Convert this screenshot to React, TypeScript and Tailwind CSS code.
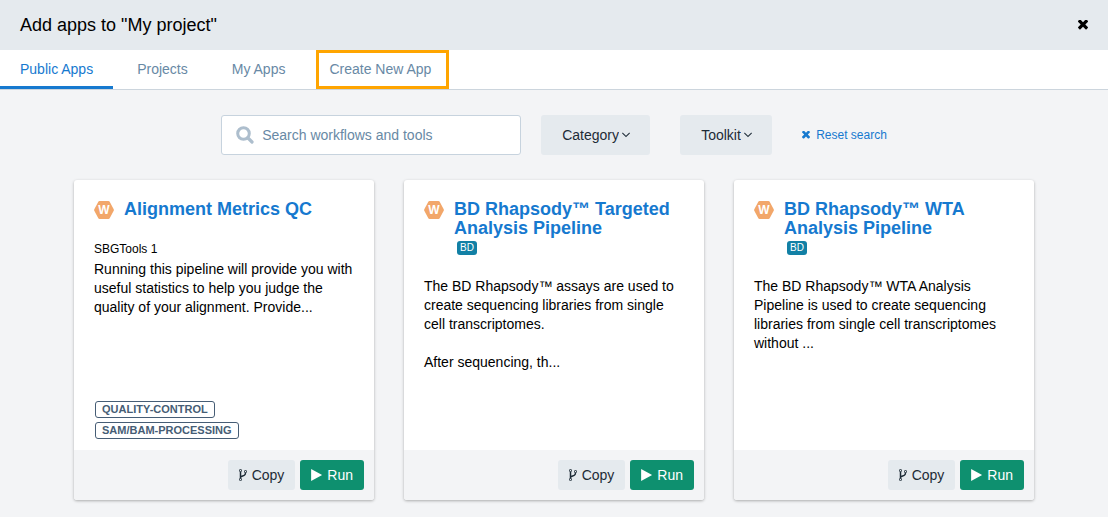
import clsx from "clsx"
import { useState } from "react"

const TABS = ["Public Apps", "Projects", "My Apps", "Create New App"]

type AppInfo = {
  name: string
  badge?: string
  toolkit?: string
  description: string
  tags: string[]
}

const APPS: AppInfo[] = [
  {
    name: "Alignment Metrics QC",
    toolkit: "SBGTools 1",
    description:
      "Running this pipeline will provide you with useful statistics to help you judge the quality of your alignment. Provide...",
    tags: ["QUALITY-CONTROL", "SAM/BAM-PROCESSING"],
  },
  {
    name: "BD Rhapsody™ Targeted Analysis Pipeline",
    badge: "BD",
    description:
      "The BD Rhapsody™ assays are used to create sequencing libraries from single cell transcriptomes.\n\nAfter sequencing, th...",
    tags: [],
  },
  {
    name: "BD Rhapsody™ WTA Analysis Pipeline",
    badge: "BD",
    description:
      "The BD Rhapsody™ WTA Analysis Pipeline is used to create sequencing libraries from single cell transcriptomes without ...",
    tags: [],
  },
]

type IconProps = { className?: string }

function TimesIcon({ className }: IconProps) {
  return (
    <svg viewBox="302 430 1188 1188" fill="currentColor" className={className} aria-hidden="true">
      <path d="M1490 1322q0 40-28 68l-136 136q-28 28-68 28t-68-28l-294-294-294 294q-28 28-68 28t-68-28l-136-136q-28-28-28-68t28-68l294-294-294-294q-28-28-28-68t28-68l136-136q28-28 68-28t68 28l294 294 294-294q28-28 68-28t68 28l136 136q28 28 28 68t-28 68l-294 294 294 294q28 28 28 68z" />
    </svg>
  )
}

function SearchIcon({ className }: IconProps) {
  return (
    <svg viewBox="0 0 18 18" fill="none" stroke="currentColor" className={className} aria-hidden="true">
      <circle cx="7.500" cy="7.500" r="5.800" strokeWidth="3" />
      <path d="M12 12l4 4" strokeWidth="3.200" strokeLinecap="round" />
    </svg>
  )
}

function AngleDownIcon({ className }: IconProps) {
  return (
    <svg viewBox="384 448 1024 1024" fill="currentColor" className={className} aria-hidden="true">
      <path d="M1395 736q0 13-10 23l-466 466q-10 10-23 10t-23-10l-466-466q-10-10-10-23t10-23l50-50q10-10 23-10t23 10l393 393 393-393q10-10 23-10t23 10l50 50q10 10 10 23z" />
    </svg>
  )
}

function ForkIcon({ className }: IconProps) {
  return (
    <svg viewBox="384 0 1024 1792" fill="currentColor" className={className} aria-hidden="true">
      <path d="M672 1472q0-40-28-68t-68-28-68 28-28 68 28 68 68 28 68-28 28-68zm0-1152q0-40-28-68t-68-28-68 28-28 68 28 68 68 28 68-28 28-68zm640 128q0-40-28-68t-68-28-68 28-28 68 28 68 68 28 68-28 28-68zm96 0q0 52-26 96.500t-70 69.500q-2 287-226 414-67 38-203 81-128 40-169.500 71t-41.500 100v26q44 25 70 69.500t26 96.500q0 80-56 136t-136 56-136-56-56-136q0-52 26-96.500t70-69.500v-820q-44-25-70-69.500t-26-96.500q0-80 56-136t136-56 136 56 56 136q0 52-26 96.500t-70 69.500v497q54-26 154-57 55-17 87.500-29.500t70.500-31 59-39.500 40.500-51 28-69.500 8.500-91.500q-44-25-70-69.500t-26-96.500q0-80 56-136t136-56 136 56 56 136z" />
    </svg>
  )
}

function PlayIcon({ className }: IconProps) {
  return (
    <svg viewBox="192 110 1408 1572" fill="currentColor" className={className} aria-hidden="true">
      <path d="M1576 927l-1328 738q-23 13-39.500 3t-16.500-36v-1472q0-26 16.500-36t39.500 3l1328 738q23 13 23 33t-23 33z" />
    </svg>
  )
}

function WorkflowIcon() {
  return (
    <span className="grid h-[19px] w-5 shrink-0 place-items-center">
      <svg viewBox="0 0 20 18" className="col-start-1 row-start-1 h-[18px] w-5" aria-hidden="true">
        <path d="M5.500 0h9q.8 0 1.200.7l4 7.500q.4.800 0 1.600l-4 7.500q-.4.700-1.200.7h-9q-.8 0-1.200-.7l-4-7.500q-.4-.8 0-1.600l4-7.500q.4-.7 1.200-.7z" fill="#f2a76a" />
      </svg>
      <span className="col-start-1 row-start-1 text-[12px] leading-[18px] font-bold text-white">
        W
      </span>
    </span>
  )
}

function FilterSelect({ label }: { label: string }) {
  return (
    <div className="relative">
      <select
        aria-label={label}
        className="h-10 appearance-none rounded-[3px] bg-[#e5eaee] pr-[31px] pl-[21px] text-[14px] text-[#1d2b36]"
      >
        <option>{label}</option>
      </select>
      <AngleDownIcon className="pointer-events-none absolute top-4 right-5 h-2 w-2 text-[#1d2b36]" />
    </div>
  )
}

function AppCard({ app }: { app: AppInfo }) {
  return (
    <article className="flex min-h-80 w-[300px] flex-col rounded-[3px] bg-white shadow-[0_1px_3px_rgba(0,0,0,0.3)]">
      <div className="flex flex-1 flex-col px-5 pt-5 pb-[11px]">
        <header className="mb-5 flex gap-[10px]">
          <WorkflowIcon />
          <div>
            <h2 className="text-[18px] leading-[19px] font-bold text-[#1679cf]">
              <a href="#">{app.name}</a>
            </h2>
            {app.badge && (
              <div className="flex h-[19px] items-center pl-[3px]">
                <span className="rounded-[3px] bg-[#1280a5] px-[3px] text-[10px] leading-[14px] text-white">
                  {app.badge}
                </span>
              </div>
            )}
          </div>
        </header>
        {app.toolkit && <p className="text-[12px] leading-[21px]">{app.toolkit}</p>}
        <p className="text-[14px] leading-[19px] whitespace-pre-line">{app.description}</p>
        <ul className="mt-auto flex flex-col items-start gap-1 pl-px">
          {app.tags.map((tag) => (
            <li
              key={tag}
              className="rounded-[3px] border border-[#465d75] px-[6px] text-[11px] leading-[15px] font-bold text-[#465d75]"
            >
              {tag}
            </li>
          ))}
        </ul>
      </div>
      <footer className="flex justify-end gap-[5px] rounded-b-[3px] bg-[#f3f4f6] p-[10px] text-[14px]">
        <button className="flex h-[30px] items-center gap-[5px] rounded-[3px] bg-[#e5eaee] px-[11px] text-[#1d2b36]">
          <ForkIcon className="h-[14px] w-2" />
          Copy
        </button>
        <button className="flex h-[30px] items-center gap-[5px] rounded-[3px] bg-[#0e906f] px-[11px] text-white">
          <PlayIcon className="h-3 w-[11px]" />
          Run
        </button>
      </footer>
    </article>
  )
}

export default function App() {
  const [tab, setTab] = useState("Public Apps")
  return (
    <div className="flex min-h-screen flex-col bg-[#f3f4f6] font-['Liberation_Sans',Arial,sans-serif] text-black">
      <header className="flex h-[50px] items-center justify-between bg-[#e5eaee] px-5">
        <h1 className="text-[18px]">Add apps to "My project"</h1>
        <button aria-label="Close" className="flex h-5 items-center">
          <TimesIcon className="h-[10px] w-[10px]" />
        </button>
      </header>
      <nav className="flex h-10 gap-1 border-b border-[#ccd5dd] bg-white text-[14px]">
        {TABS.map((name) => (
          <button
            key={name}
            onClick={() => setTab(name)}
            className={clsx(
              "h-[39px]",
              name === "Create New App"
                ? "ml-[7px] border-[3px] border-[#ffa500] pr-[15px] pl-[10px]"
                : "border-b-[3px] px-5 pt-[3px]",
              name !== "Create New App" && (tab === name ? "border-[#1679cf]" : "border-transparent"),
              tab === name ? "text-[#1679cf]" : "text-[#6889a5]",
            )}
          >
            {name}
          </button>
        ))}
      </nav>
      <main className="flex flex-1 flex-col gap-[25px] px-5 pt-[25px] pb-4">
        <form className="flex flex-wrap items-center justify-center gap-[30px]">
          <div className="flex flex-wrap gap-5">
            <label className="flex h-10 w-[300px] items-center gap-2 rounded-[3px] border border-[#c7d3de] bg-white px-[14px]">
              <SearchIcon className="h-[18px] w-[18px] shrink-0 text-[#adbecd]" />
              <input
                type="text"
                aria-label="Search workflows and tools"
                placeholder="Search workflows and tools"
                className="min-w-0 flex-1 text-[14px] outline-none placeholder:text-[#6889a5]"
              />
            </label>
            <FilterSelect label="Category" />
          </div>
          <FilterSelect label="Toolkit" />
          <button type="reset" className="flex items-center gap-[6px] text-[12px] text-[#1679cf]">
            <TimesIcon className="h-2 w-2" />
            Reset search
          </button>
        </form>
        <section className="flex flex-wrap justify-center gap-[30px]">
          {APPS.map((app) => (
            <AppCard key={app.name} app={app} />
          ))}
        </section>
      </main>
    </div>
  )
}
